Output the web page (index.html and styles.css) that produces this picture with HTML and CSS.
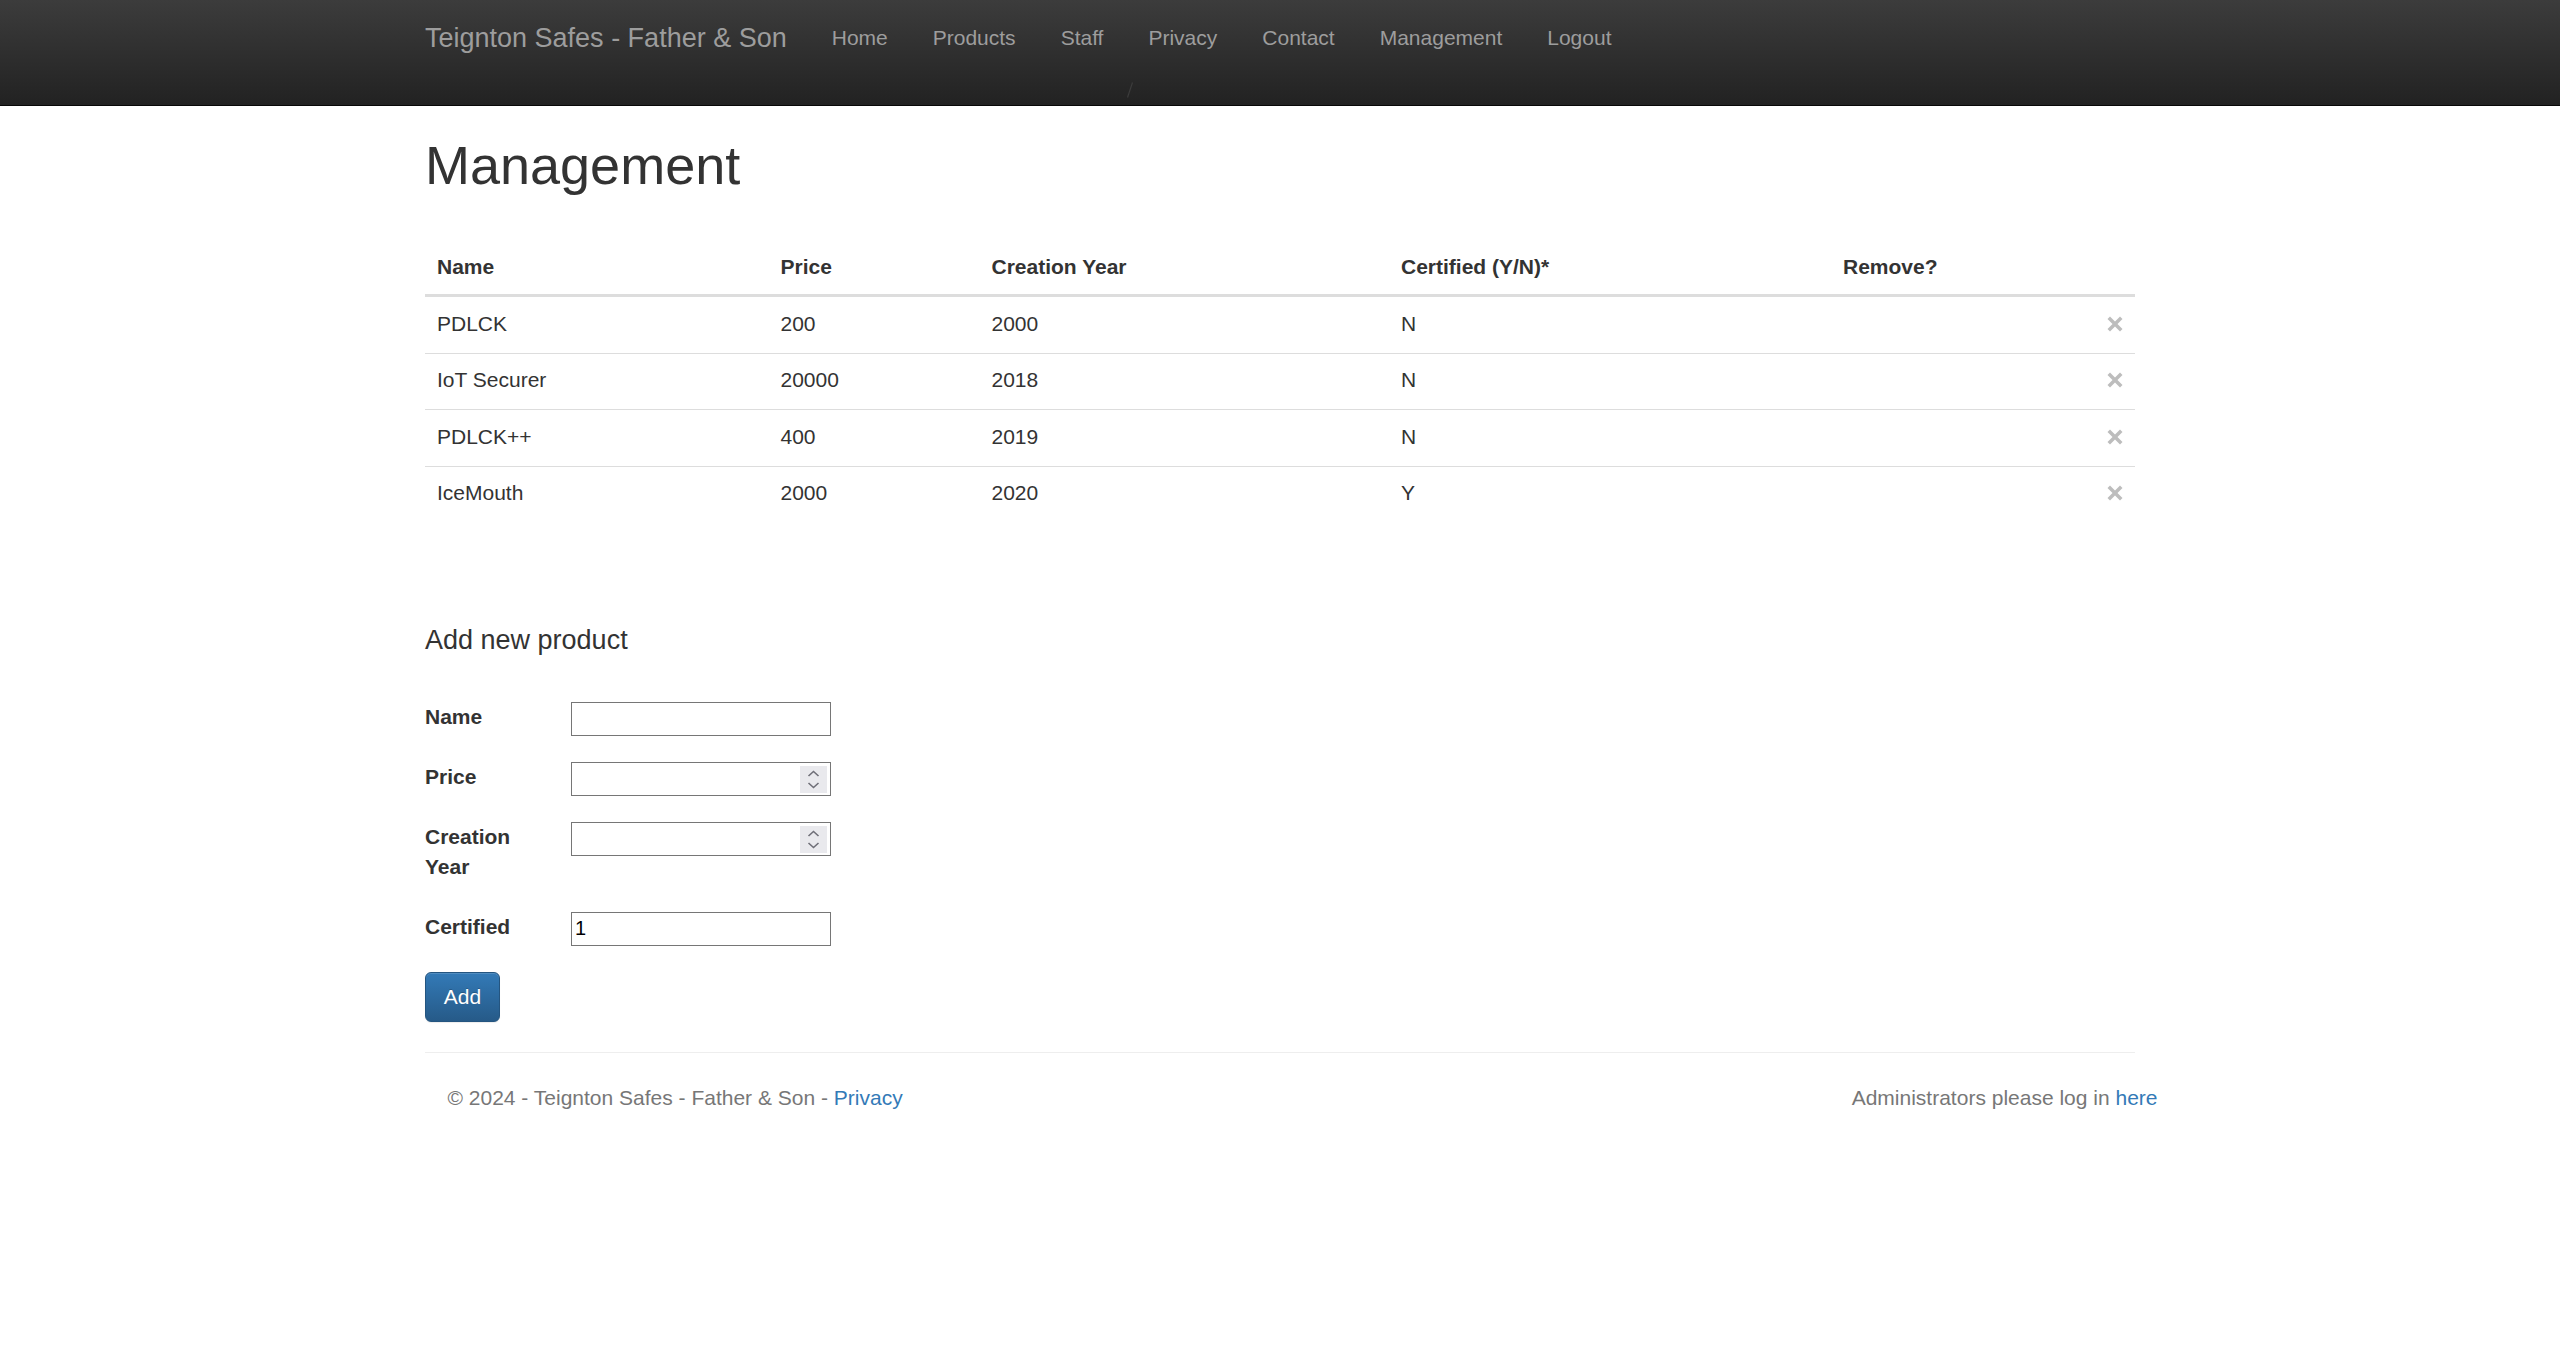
FILE: index.html
```html
<!DOCTYPE html>
<html lang="en">
<head>
<meta charset="utf-8">
<title>Management - Teignton Safes</title>
<link rel="stylesheet" href="styles.css">
</head>
<body>
<header class="navbar">
  <div class="container nav-container">
    <div class="nav-row">
      <a class="brand" href="#">Teignton Safes - Father &amp; Son</a>
      <ul class="nav-links">
        <li><a href="#">Home</a></li>
        <li><a href="#">Products</a></li>
        <li><a href="#">Staff</a></li>
        <li><a href="#">Privacy</a></li>
        <li><a href="#">Contact</a></li>
        <li><a href="#">Management</a></li>
        <li><a href="#">Logout</a></li>
      </ul>
    </div>
    <div class="nav-extra">
      <svg class="slash" width="8" height="16" viewBox="0 0 8 16"><line x1="6.5" y1="0.5" x2="1.5" y2="15.5" stroke="#3c3c3c" stroke-width="1.2"/></svg>
    </div>
  </div>
</header>

<main class="container">
  <h1 class="page-title">Management</h1>

  <table class="products">
    <colgroup>
      <col class="c-name"><col class="c-price"><col class="c-year"><col class="c-cert"><col class="c-remove">
    </colgroup>
    <thead>
      <tr><th>Name</th><th>Price</th><th>Creation Year</th><th>Certified (Y/N)*</th><th>Remove?</th></tr>
    </thead>
    <tbody>
      <tr><td>PDLCK</td><td>200</td><td>2000</td><td>N</td><td class="remove-cell"><a href="#" class="remove" aria-label="Remove"><svg width="16" height="16" viewBox="0 0 16 16"><path d="M0.5 3 L3 0.5 L8 5.5 L13 0.5 L15.5 3 L10.5 8 L15.5 13 L13 15.5 L8 10.5 L3 15.5 L0.5 13 L5.5 8 Z" fill="#bdbdbd"/></svg></a></td></tr>
      <tr><td>IoT Securer</td><td>20000</td><td>2018</td><td>N</td><td class="remove-cell"><a href="#" class="remove" aria-label="Remove"><svg width="16" height="16" viewBox="0 0 16 16"><path d="M0.5 3 L3 0.5 L8 5.5 L13 0.5 L15.5 3 L10.5 8 L15.5 13 L13 15.5 L8 10.5 L3 15.5 L0.5 13 L5.5 8 Z" fill="#bdbdbd"/></svg></a></td></tr>
      <tr><td>PDLCK++</td><td>400</td><td>2019</td><td>N</td><td class="remove-cell"><a href="#" class="remove" aria-label="Remove"><svg width="16" height="16" viewBox="0 0 16 16"><path d="M0.5 3 L3 0.5 L8 5.5 L13 0.5 L15.5 3 L10.5 8 L15.5 13 L13 15.5 L8 10.5 L3 15.5 L0.5 13 L5.5 8 Z" fill="#bdbdbd"/></svg></a></td></tr>
      <tr><td>IceMouth</td><td>2000</td><td>2020</td><td>Y</td><td class="remove-cell"><a href="#" class="remove" aria-label="Remove"><svg width="16" height="16" viewBox="0 0 16 16"><path d="M0.5 3 L3 0.5 L8 5.5 L13 0.5 L15.5 3 L10.5 8 L15.5 13 L13 15.5 L8 10.5 L3 15.5 L0.5 13 L5.5 8 Z" fill="#bdbdbd"/></svg></a></td></tr>
    </tbody>
  </table>

  <h4 class="add-title">Add new product</h4>

  <form class="add-form">
    <label for="f-name">Name</label>
    <input id="f-name" type="text" class="field">

    <label for="f-price">Price</label>
    <span class="spin-field">
      <input id="f-price" type="text" class="field">
      <span class="spin"><svg width="27" height="27" viewBox="0 0 27 27"><polyline points="8.5,10 13.5,5.5 18.5,10" fill="none" stroke="#6f6f78" stroke-width="1.6"/><polyline points="8.5,17 13.5,21.5 18.5,17" fill="none" stroke="#6f6f78" stroke-width="1.6"/></svg></span>
    </span>

    <label for="f-year">Creation Year</label>
    <span class="spin-field">
      <input id="f-year" type="text" class="field">
      <span class="spin"><svg width="27" height="27" viewBox="0 0 27 27"><polyline points="8.5,10 13.5,5.5 18.5,10" fill="none" stroke="#6f6f78" stroke-width="1.6"/><polyline points="8.5,17 13.5,21.5 18.5,17" fill="none" stroke="#6f6f78" stroke-width="1.6"/></svg></span>
    </span>

    <label for="f-cert">Certified</label>
    <input id="f-cert" type="text" class="field" value="1">

    <button type="button" class="btn-primary">Add</button>
  </form>

  <hr class="rule">

  <footer class="footer">
    <p>© 2024 - Teignton Safes - Father &amp; Son - <a href="#">Privacy</a></p>
    <p>Administrators please log in <a href="#">here</a></p>
  </footer>
</main>
</body>
</html>
```

FILE: styles.css
```css
* { box-sizing: border-box; }

html, body {
  margin: 0;
  padding: 0;
  background: #fff;
}

body {
  font-family: "Liberation Sans", Arial, Helvetica, sans-serif;
  font-size: 21px;
  line-height: 30px;
  color: #333;
}

a { color: #337ab7; text-decoration: none; }

.container {
  width: 1755px;
  margin: 0 auto;
  padding: 0 22.5px;
}

/* Navbar */
.navbar {
  height: 106px;
  background-image: linear-gradient(to bottom, #3c3c3c 0, #222 100%);
  border-bottom: 1px solid #080808;
}

.nav-row {
  display: flex;
  height: 75px;
}

.brand {
  display: block;
  padding: 22.5px 22.5px;
  margin-left: -22.5px;
  font-size: 27px;
  line-height: 30px;
  height: 75px;
  color: #9d9d9d;
}

.nav-links {
  display: flex;
  list-style: none;
  margin: 0;
  padding: 0;
}

.nav-links a {
  display: block;
  padding: 22.5px 22.5px;
  font-size: 21px;
  line-height: 30px;
  color: #9d9d9d;
}

.nav-extra {
  height: 30px;
  padding-left: 701px;
  padding-top: 7px;
}

.slash { display: block; }

/* Heading */
.page-title {
  font-size: 54px;
  font-weight: 500;
  line-height: 59.4px;
  margin: 29.5px 0 0;
  color: #333;
}

/* Table */
.products {
  width: 100%;
  table-layout: fixed;
  border-collapse: separate;
  border-spacing: 0;
  margin: 45px 0 0;
}

.c-name { width: 343.5px; }
.c-price { width: 211px; }
.c-year { width: 409.5px; }
.c-cert { width: 442px; }
.c-remove { width: 304px; }

.products th {
  text-align: left;
  font-weight: bold;
  padding: 12px 12px;
  line-height: 30px;
  border-bottom: 3px solid #ddd;
}

.products td {
  padding: 11.5px 12px 14px;
  line-height: 30px;
  border-top: 1px solid #ddd;
}

.products tbody tr:first-child td {
  border-top: 0;
  padding-top: 12px;
}

.remove-cell { text-align: right; }

.remove svg {
  display: inline-block;
  vertical-align: -1px;
}

/* Add form */
.add-title {
  font-size: 27px;
  font-weight: 500;
  line-height: 29.7px;
  margin: 104px 0 45.5px;
  color: #333;
}

.add-form {
  display: grid;
  grid-template-columns: 120px 260px;
  column-gap: 26px;
  row-gap: 30px;
  align-items: start;
}

.add-form label {
  font-weight: bold;
  line-height: 30px;
}

.field {
  display: block;
  width: 260px;
  height: 34px;
  margin: 0 0 -4px;
  padding: 1px 3px;
  border: 1px solid #767676;
  border-radius: 0;
  font-family: "Liberation Sans", Arial, sans-serif;
  font-size: 20px;
  color: #000;
  background: #fff;
}

.spin-field {
  position: relative;
  display: block;
  width: 260px;
  height: 30px;
}

.spin {
  position: absolute;
  top: 4px;
  right: 4px;
  width: 27px;
  height: 27px;
  background: #e9e9ed;
}

.spin svg { display: block; }

.btn-primary {
  grid-column: 1;
  justify-self: start;
  width: 75px;
  height: 50px;
  padding: 0;
  font-family: "Liberation Sans", Arial, sans-serif;
  font-size: 21px;
  color: #fff;
  text-shadow: 0 -1px 0 rgba(0,0,0,.2);
  background-image: linear-gradient(to bottom, #337ab7 0, #265a88 100%);
  border: 1px solid #245580;
  border-radius: 6px;
  box-shadow: inset 0 1px 0 rgba(255,255,255,.15), 0 1px 1px rgba(0,0,0,.075);
}

/* Footer */
.rule {
  margin: 30px 0 30px;
  border: 0;
  border-top: 1px solid #eee;
  height: 0;
}

.footer {
  display: flex;
  justify-content: space-between;
  margin: 0 -22.5px 0 22.5px;
  color: #777;
}

.footer p {
  margin: 0 0 15px;
}
```
